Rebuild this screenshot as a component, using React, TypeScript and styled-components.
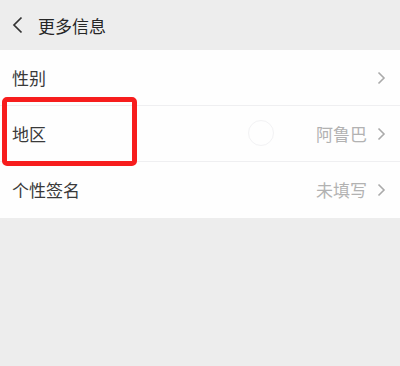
import React from "react";
import styled, { createGlobalStyle } from "styled-components";

const Global = createGlobalStyle`
  html, body { margin: 0; padding: 0; background: #ededed; }
  body { font-family: "Noto Sans CJK SC", "Noto Sans", sans-serif; }
`;

const Page = styled.div`
  position: relative;
  width: 400px;
  height: 366px;
  background: #ededed;
  overflow: hidden;
`;

const Header = styled.div`
  height: 50px;
  display: flex;
  align-items: center;
  padding-left: 12px;
  gap: 15px;
  background: #ededed;
`;

const Title = styled.div`
  font-size: 17px;
  color: #262626;
`;

const List = styled.div`
  background: #fefefe;
`;

const Row = styled.div<{ $last?: boolean }>`
  height: 55px;
  display: flex;
  align-items: center;
  padding: 0 14px 0 12px;
  border-bottom: 1px solid ${(p) => (p.$last ? "transparent" : "#efeff1")};
`;

const Label = styled.div`
  flex: 1;
  font-size: 17px;
  color: #3a3a3a;
`;

const Value = styled.div`
  font-size: 17px;
  color: #b2b2b2;
  margin-right: 10px;
`;

const Highlight = styled.div`
  position: absolute;
  left: 2px;
  top: 97px;
  width: 125px;
  height: 59px;
  border: 5px solid #f71d1d;
  border-radius: 5px;
`;

const Ripple = styled.div`
  position: absolute;
  left: 248px;
  top: 120px;
  width: 24px;
  height: 24px;
  border-radius: 50%;
  border: 1px solid #f2f2f4;
`;

const Chevron = () => (
  <svg width="9" height="14" viewBox="0 0 9 14">
    <path d="M1.5 1.5 L7 7 L1.5 12.5" fill="none" stroke="#aaaaaa" strokeWidth="1.6" />
  </svg>
);

const Back = () => (
  <svg width="11" height="18" viewBox="0 0 11 18">
    <path d="M9.5 1.5 L2 9 L9.5 16.5" fill="none" stroke="#333" strokeWidth="1.7" />
  </svg>
);

export default function App() {
  return (
    <Page>
      <Global />
      <Header>
        <Back />
        <Title>更多信息</Title>
      </Header>
      <List>
        <Row>
          <Label>性别</Label>
          <Chevron />
        </Row>
        <Row>
          <Label>地区</Label>
          <Value>阿鲁巴</Value>
          <Chevron />
        </Row>
        <Row $last>
          <Label>个性签名</Label>
          <Value>未填写</Value>
          <Chevron />
        </Row>
      </List>
      <Ripple />
      <Highlight />
    </Page>
  );
}
